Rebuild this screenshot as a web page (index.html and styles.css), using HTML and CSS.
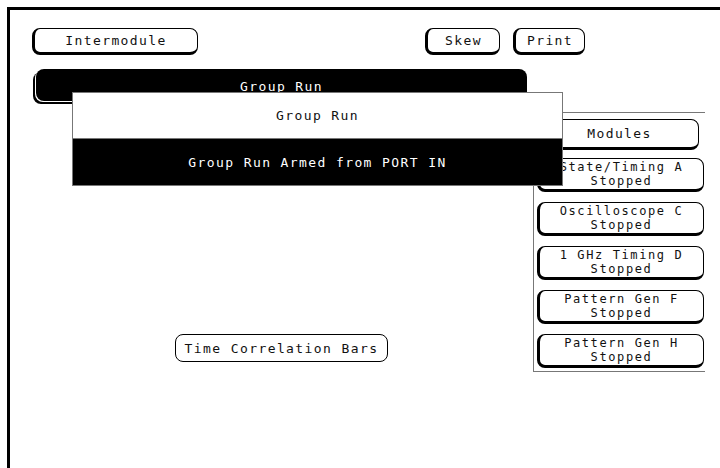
FILE: index.html
```html
<!DOCTYPE html>
<html>
<head>
<meta charset="utf-8">
<link rel="stylesheet" href="styles.css">
</head>
<body>
<div class="screen">
  <div class="toprow">
    <div class="btn intermodule">Intermodule</div>
    <div class="btn skew">Skew</div>
    <div class="btn print">Print</div>
  </div>
  <div class="grouprun">Group Run</div>
  <div class="mainrow">
    <div class="leftarea">
      <div class="btn flat tcb">Time Correlation Bars</div>
    </div>
    <div class="panel">
      <div class="btn modules">Modules</div>
      <div class="modlist">
        <div class="btn mod"><span>State/Timing A</span><span>Stopped</span></div>
        <div class="btn mod"><span>Oscilloscope C</span><span>Stopped</span></div>
        <div class="btn mod"><span>1 GHz Timing D</span><span>Stopped</span></div>
        <div class="btn mod"><span>Pattern Gen F</span><span>Stopped</span></div>
        <div class="btn mod"><span>Pattern Gen H</span><span>Stopped</span></div>
      </div>
    </div>
  </div>
  <div class="popup">
    <div class="popup-title">Group Run</div>
    <div class="popup-option">Group Run Armed from PORT IN</div>
  </div>
</div>
</body>
</html>
```
FILE: styles.css
```css
* { box-sizing: border-box; }
html, body { margin: 0; padding: 0; background: #fff; }
body {
  font-family: "DejaVu Sans Mono", "Liberation Mono", monospace;
  font-size: 13px;
  letter-spacing: 1.4px;
  color: #111;
  overflow: hidden;
}
.screen {
  position: relative;
  margin: 7px 0 0 7px;
  width: 713px;
  height: 461px;
  border-top: 3px solid #000;
  border-left: 3px solid #000;
}
.btn {
  background: #fff;
  border: 1px solid #000;
  border-left-width: 3px;
  border-bottom-width: 3px;
  border-radius: 8px;
  display: flex;
  align-items: center;
  justify-content: center;
  white-space: nowrap;
}
.toprow {
  display: flex;
  padding-top: 18px;
  height: 45px;
}
.intermodule { margin-left: 22px; width: 166px; height: 27px; }
.skew { margin-left: 227px; width: 75px; height: 27px; }
.print { margin-left: 13px; width: 72px; height: 27px; }
.grouprun {
  margin: 14px 0 0 26px;
  width: 491px;
  height: 32px;
  background: #000;
  color: #fff;
  border-radius: 8px;
  box-shadow: -1px 1px 0 #fff, -3px 3px 0 #000;
  text-align: center;
  padding-top: 11px;
  line-height: 14px;
}
.mainrow {
  display: flex;
  margin-top: 11px;
}
.leftarea { width: 523px; }
.flat { border-width: 1px; }
.tcb {
  margin: 222px 0 0 165px;
  width: 213px;
  height: 28px;
}
.panel {
  width: 172px;
  height: 260px;
  border-top: 1px solid #777;
  border-left: 1px solid #777;
  border-bottom: 1px solid #777;
  padding-top: 6px;
}
.modules { margin-left: 4px; width: 161px; height: 31px; }
.modlist {
  display: flex;
  flex-direction: column;
  gap: 10px;
  margin-top: 8px;
  margin-left: 3px;
}
.mod {
  width: 167px;
  height: 34px;
  flex-direction: column;
  font-size: 12px;
  line-height: 14px;
  letter-spacing: 1.6px;
}
.mod span { display: block; }
.popup {
  position: absolute;
  left: 62px;
  top: 82px;
  width: 491px;
  height: 94px;
  border: 1px solid #777;
  background: #fff;
  display: flex;
  flex-direction: column;
}
.popup-title {
  height: 46px;
  display: flex;
  align-items: center;
  justify-content: center;
  border-bottom: 1px solid #777;
}
.popup-option {
  flex: 1;
  background: #000;
  color: #fff;
  display: flex;
  align-items: center;
  justify-content: center;
  padding-top: 1px;
}
```
